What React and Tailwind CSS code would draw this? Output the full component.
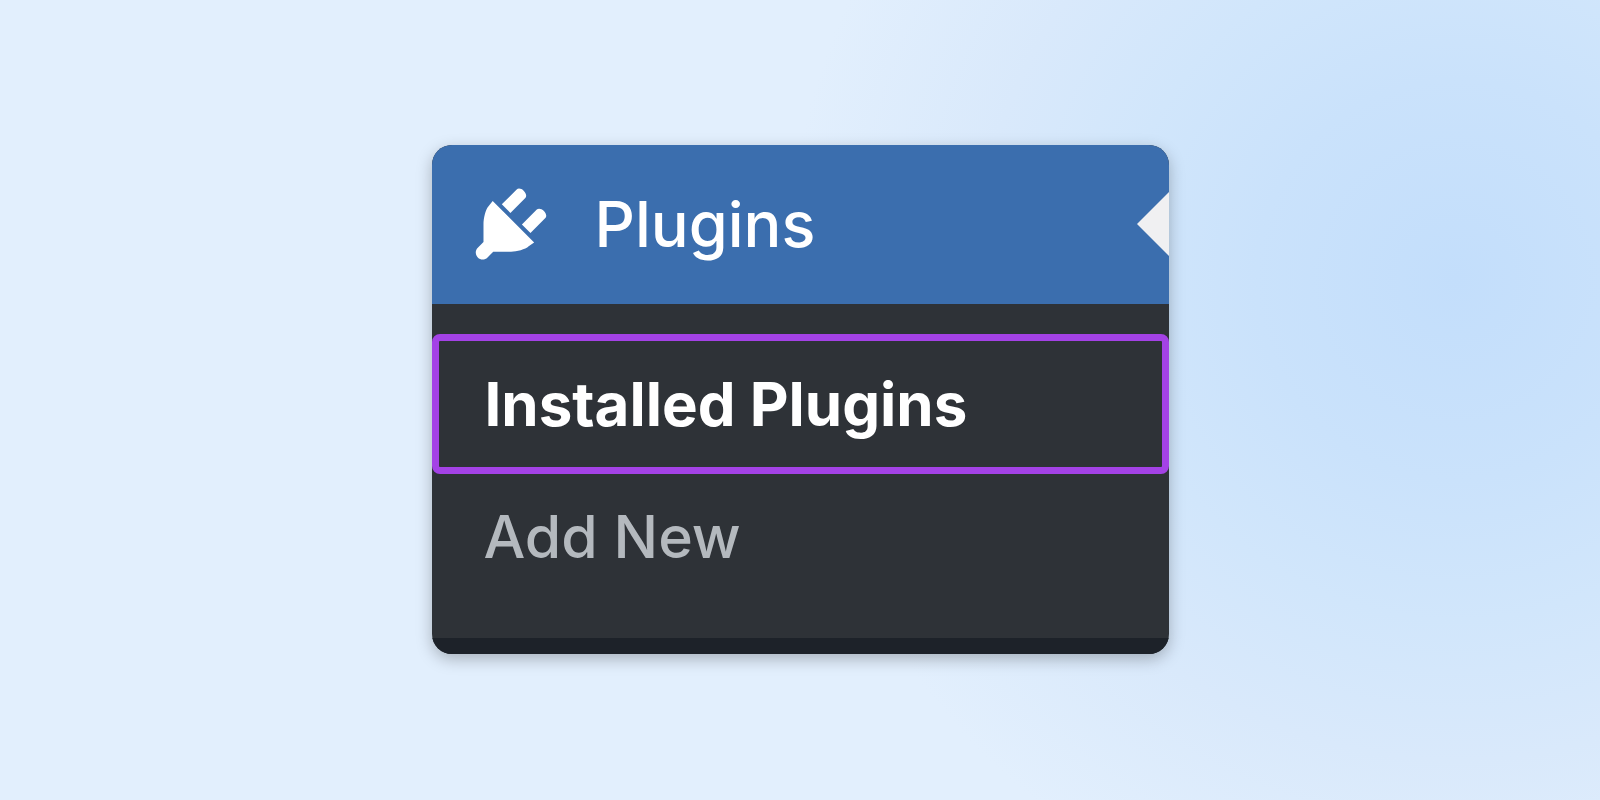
function PluginIcon() {
  return (
    <svg viewBox="0 0 20 20" className="size-[92px] shrink-0" fill="currentColor" aria-hidden="true">
      <path d="M13.11 4.36L9.87 7.6 8 5.73l3.24-3.24c.35-.34 1.05-.2 1.56.32.52.51.66 1.21.31 1.55zm-8 1.77l.91-1.12 9.01 9.01-1.19.84c-.71.71-2.63 1.16-3.82 1.16H6.14L4.9 17.26c-.59.59-1.54.59-2.12 0-.59-.58-.59-1.53 0-2.12l1.24-1.24v-3.88c0-1.13.4-3.19 1.09-3.89zm7.26 3.97l3.24-3.24c.34-.35 1.04-.21 1.55.31.52.51.66 1.21.31 1.55l-3.24 3.25z" />
    </svg>
  );
}

export default function App() {
  return (
    <main className="flex min-h-screen items-center justify-center bg-[#e2effd] bg-[radial-gradient(circle_at_91%_35%,#c3defb_0px,#cae2fb_200px,#d1e6fb_340px,#d9e9fb_480px,#e2effd_670px)] pb-0.5 font-['Inter',sans-serif]">
      <nav
        aria-label="Plugins"
        className="w-full max-w-[737px] overflow-hidden rounded-[20px] bg-[#2e3237] shadow-[0_5px_16px_rgba(0,0,0,0.26)]"
      >
        <a href="#plugins" className="flex h-[159px] items-center bg-[#3b6eae] pl-[33px] text-white">
          <PluginIcon />
          <span className="ml-[38px] flex-1 text-[63px] leading-none font-medium">Plugins</span>
          <svg viewBox="0 0 32 64" className="h-16 w-8 shrink-0" aria-hidden="true">
            <path d="M32 0v64L0 32z" fill="#f0f0f2" />
          </svg>
        </a>
        <ul className="pt-[30px] pb-[38px] text-[60px] leading-none">
          <li>
            <a
              href="#installed"
              aria-current="page"
              className="flex h-[140px] items-center rounded-lg border-[7px] border-[#a442e6] pl-[46px] font-bold text-white"
            >
              Installed Plugins
            </a>
          </li>
          <li>
            <a href="#add-new" className="flex h-[126px] items-center pl-[52px] text-[59px] font-medium text-[#b4b9be]">
              Add New
            </a>
          </li>
        </ul>
        <div className="h-4 bg-[#1d2229]" />
      </nav>
    </main>
  );
}
